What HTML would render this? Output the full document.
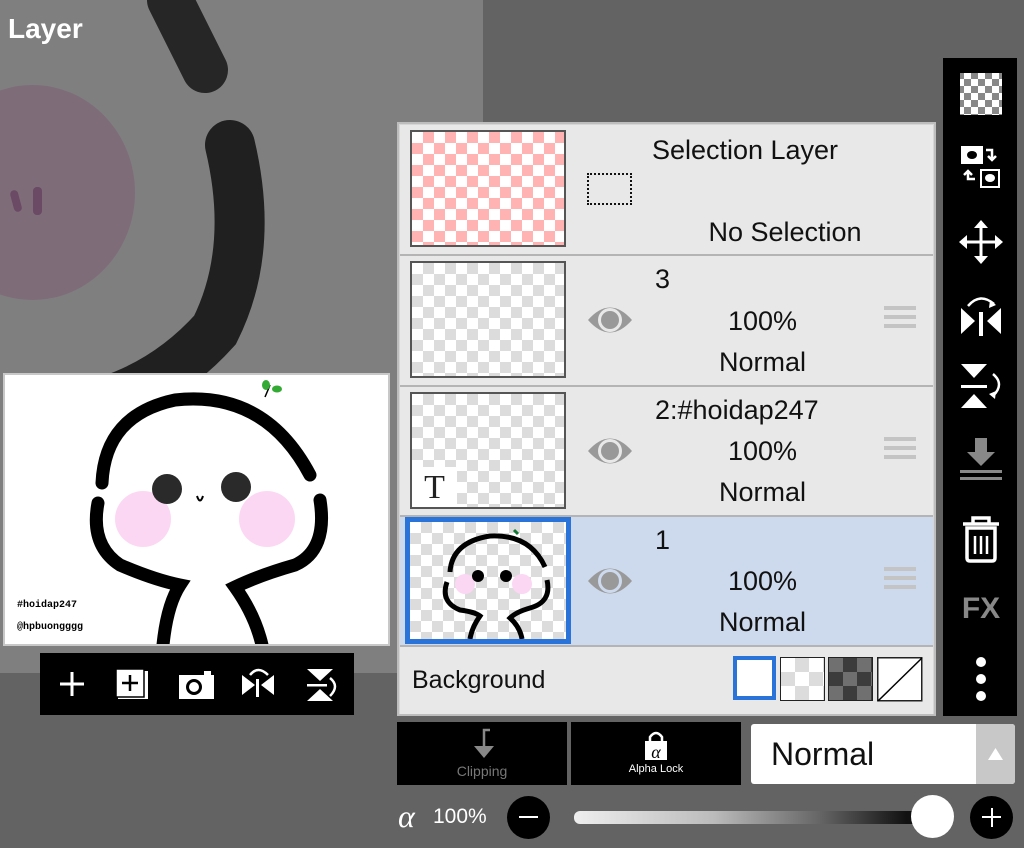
<!DOCTYPE html>
<html><head><meta charset="utf-8"><style>
*{margin:0;padding:0;box-sizing:border-box}
body{width:1024px;height:848px;overflow:hidden;background:#636363;font-family:"Liberation Sans",sans-serif;position:relative}
.a{position:absolute}
.chk{background-color:#fff;background-image:linear-gradient(45deg,#dcdcdc 25%,transparent 25%,transparent 75%,#dcdcdc 75%),linear-gradient(45deg,#dcdcdc 25%,transparent 25%,transparent 75%,#dcdcdc 75%);background-size:22px 22px;background-position:0 0,11px 11px}
.pink{background-color:#fff;background-image:linear-gradient(45deg,#ffb3b3 25%,transparent 25%,transparent 75%,#ffb3b3 75%),linear-gradient(45deg,#ffb3b3 25%,transparent 25%,transparent 75%,#ffb3b3 75%);background-size:22px 22px;background-position:0 0,11px 11px}
.row{position:absolute;left:400px;width:533px;background:#e8e8e8;border-bottom:2px solid #b4b4b4}
.th{position:absolute;left:10px;top:5px;width:156px;height:117px;border:2px solid #555}
.t{position:absolute;font-size:27px;color:#111;text-align:center}
.eye{position:absolute;left:187px;top:47px}
.hb{position:absolute;left:484px;top:50px;width:32px}
.hb i{display:block;height:4px;background:#c4c4c4;margin-bottom:5px}
.tb svg{position:absolute;left:0}
</style></head><body>
<!-- canvas bg -->
<div class="a" style="left:0;top:0;width:483px;height:673px;background:#7f7f7f;overflow:hidden">
 <div class="a" style="left:-70px;top:85px;width:205px;height:215px;border-radius:50%;background:#806878;opacity:.8"></div>
 <div class="a" style="left:12px;top:190px;width:8px;height:22px;border-radius:4px;background:#6a4a64;transform:rotate(-15deg)"></div>
 <div class="a" style="left:33px;top:187px;width:9px;height:28px;border-radius:4px;background:#6a4a64"></div>
 <svg class="a" style="left:0;top:0" width="483" height="673"><path d="M170 0 Q190 40 205 70" stroke="#222" stroke-width="46" stroke-linecap="round" fill="none" opacity=".95"/><path d="M230 145 Q255 250 215 330 Q170 380 110 400" stroke="#202020" stroke-width="50" stroke-linecap="round" fill="none"/></svg>
</div>
<div class="a" style="left:8px;top:13px;color:#fff;font-weight:bold;font-size:28px">Layer</div>

<!-- preview -->
<div class="a" style="left:3px;top:373px;width:387px;height:273px;background:#fff;border:2px solid #c8c8c8;overflow:hidden">
<svg width="387" height="273" viewBox="0 0 387 273">
 <path d="M97 108 Q100 40 170 25 Q260 15 305 100" stroke="#000" stroke-width="13" fill="none" stroke-linecap="round"/>
 <path d="M93 128 Q85 170 115 190 Q150 205 175 210 Q162 230 158 270" stroke="#000" stroke-width="13" fill="none" stroke-linecap="round"/>
 <path d="M315 125 Q323 175 290 190 Q255 200 230 212 Q250 240 257 270" stroke="#000" stroke-width="13" fill="none" stroke-linecap="round"/>
 <circle cx="138" cy="144" r="28" fill="#fbd7f3"/><circle cx="262" cy="144" r="28" fill="#fbd7f3"/>
 <circle cx="162" cy="114" r="15" fill="#2a2a2a"/><circle cx="231" cy="112" r="15" fill="#2a2a2a"/>
 <path d="M192 121 Q195 130 198 121" stroke="#000" stroke-width="2" fill="none"/>
 <path d="M260 22 Q263 15 265 10" stroke="#000" stroke-width="1.5" fill="none"/>
 <ellipse cx="261" cy="10" rx="4" ry="5" fill="#3a3"/><ellipse cx="272" cy="14" rx="5" ry="3.5" fill="#3a3"/>
 <text x="12" y="232" font-family="Liberation Mono" font-size="10" font-weight="bold">#hoidap247</text>
 <text x="12" y="254" font-family="Liberation Mono" font-size="10" font-weight="bold">@hpbuongggg</text>
</svg></div>
<div class="a" style="left:40px;top:653px;width:314px;height:62px;background:#000">
<svg width="314" height="62" fill="#fff">
 <path d="M20 31h24M32 19v24" stroke="#fff" stroke-width="3"/>
 <rect x="78" y="18" width="30" height="28" fill="#fff"/><rect x="76" y="16" width="28" height="28" fill="#fff" stroke="#000" stroke-width="1.5"/><path d="M82 30h16M90 22v16" stroke="#000" stroke-width="2.5"/>
 <rect x="139" y="22" width="35" height="24"/><rect x="164" y="18" width="7" height="4"/><circle cx="154" cy="34" r="8" fill="#000"/><circle cx="154" cy="34" r="5"/>
 <path d="M202 22l13 10-13 10zM234 22l-13 10 13 10z"/><rect x="216" y="26" width="3" height="18"/><path d="M210 22q8-10 18 0" stroke="#fff" stroke-width="2.5" fill="none"/>
 <path d="M267 16h26l-13 12zM267 48h26l-13-12z"/><rect x="267" y="31" width="20" height="2.5"/><path d="M290 25q10 8 0 18" stroke="#fff" stroke-width="2.5" fill="none"/>
</svg></div>

<!-- layer panel -->
<div class="a" style="left:397px;top:122px;width:539px;height:594px;background:#d6d6d6;border:2px solid #bdbdbd"></div>
<div class="row" style="top:125px;height:131px">
 <div class="th pink"></div>
 <div class="a" style="left:187px;top:48px;width:45px;height:32px;border:2px dotted #111"></div>
 <div class="t" style="left:210px;top:10px;width:270px">Selection Layer</div>
 <div class="t" style="left:250px;top:92px;width:270px">No Selection</div>
</div>
<div class="row" style="top:256px;height:131px">
 <div class="th chk"></div>
 <svg class="eye" width="46" height="34"><path d="M1 17Q23-8 45 17Q23 42 1 17z" fill="#999"/><circle cx="23" cy="17" r="12" fill="#e8e8e8"/><circle cx="23" cy="17" r="9" fill="#999"/></svg>
 <div class="t" style="left:255px;top:8px">3</div>
 <div class="t" style="left:290px;top:50px;width:145px">100%</div>
 <div class="t" style="left:290px;top:91px;width:145px">Normal</div>
 <div class="hb"><i></i><i></i><i></i></div>
</div>
<div class="row" style="top:387px;height:130px">
 <div class="th chk"><div class="a" style="left:0;bottom:0;width:45px;height:40px;background:#fff;font-family:'Liberation Serif';font-size:34px;text-align:center;line-height:42px;color:#222">T</div></div>
 <svg class="eye" width="46" height="34"><path d="M1 17Q23-8 45 17Q23 42 1 17z" fill="#999"/><circle cx="23" cy="17" r="12" fill="#e8e8e8"/><circle cx="23" cy="17" r="9" fill="#999"/></svg>
 <div class="t" style="left:255px;top:8px">2:#hoidap247</div>
 <div class="t" style="left:290px;top:49px;width:145px">100%</div>
 <div class="t" style="left:290px;top:90px;width:145px">Normal</div>
 <div class="hb"><i></i><i></i><i></i></div>
</div>
<div class="row" style="top:517px;height:130px;background:#cdd9ec">
 <div class="a chk" style="left:5px;top:0;width:166px;height:127px;border:5px solid #2a73d8;overflow:hidden">
 <svg width="156" height="117"><path d="M40 50Q42 20 80 14Q120 12 135 45" stroke="#000" stroke-width="5" fill="none"/><path d="M37 60Q30 80 50 88Q65 90 70 94Q62 105 60 117" stroke="#000" stroke-width="5" fill="none"/><path d="M137 58Q142 80 120 86Q106 90 100 96Q110 105 112 117" stroke="#000" stroke-width="5" fill="none"/><circle cx="55" cy="62" r="10" fill="#fbd7f3"/><circle cx="112" cy="62" r="10" fill="#fbd7f3"/><circle cx="68" cy="54" r="6"/><circle cx="96" cy="54" r="6"/><path d="M104 8l4 4" stroke="#173" stroke-width="3"/></svg></div>
 <svg class="eye" width="46" height="34"><path d="M1 17Q23-8 45 17Q23 42 1 17z" fill="#999"/><circle cx="23" cy="17" r="12" fill="#cdd9ec"/><circle cx="23" cy="17" r="9" fill="#999"/></svg>
 <div class="t" style="left:255px;top:8px">1</div>
 <div class="t" style="left:290px;top:49px;width:145px">100%</div>
 <div class="t" style="left:290px;top:90px;width:145px">Normal</div>
 <div class="hb"><i></i><i></i><i></i></div>
</div>
<div class="row" style="top:647px;height:67px;border:none">
 <div class="t" style="left:12px;top:19px;font-size:25px">Background</div>
 <div class="a" style="left:333px;top:9px;width:43px;height:44px;border:4px solid #2a73d8;background:#fff"></div>
 <div class="a chk" style="left:380px;top:10px;width:45px;height:44px;border:1.5px solid #222;background-size:28px 28px;background-position:0 0,14px 14px"></div>
 <div class="a" style="left:428px;top:10px;width:45px;height:44px;border:1.5px solid #222;background-color:#707070;background-image:linear-gradient(45deg,#3c3c3c 25%,transparent 25%,transparent 75%,#3c3c3c 75%),linear-gradient(45deg,#3c3c3c 25%,transparent 25%,transparent 75%,#3c3c3c 75%);background-size:28px 28px;background-position:0 0,14px 14px"></div>
 <svg class="a" style="left:477px;top:10px" width="46" height="45"><rect x=".75" y=".75" width="44" height="43" fill="#fff" stroke="#222" stroke-width="1.5"/><path d="M1 44L45 1" stroke="#000" stroke-width="1.5"/></svg>
</div>

<!-- right toolbar -->
<div class="a tb" style="left:943px;top:58px;width:74px;height:658px;background:#000">
<svg width="74" height="658">
 <defs><pattern id="p" width="14" height="14" patternUnits="userSpaceOnUse"><rect width="14" height="14" fill="#fff"/><rect width="7" height="7" fill="#888"/><rect x="7" y="7" width="7" height="7" fill="#888"/></pattern></defs>
 <rect x="17" y="15" width="42" height="42" fill="url(#p)"/>
 <rect x="18" y="88" width="22" height="18" fill="#fff"/><ellipse cx="29" cy="97" rx="5" ry="4"/><rect x="38" y="112" width="18" height="17" fill="none" stroke="#fff" stroke-width="2"/><ellipse cx="47" cy="120" rx="5" ry="4" fill="#fff"/>
 <path d="M43 92h6v8M45 98l4 4 4-4M32 121h-7v-6M21 117l4-4 4 4" stroke="#fff" stroke-width="2.5" fill="none"/>
 <path d="M38 166v36M20 184h36" stroke="#fff" stroke-width="3"/><path d="M38 162l-7 8h14zM38 206l-7-8h14zM16 184l8-7v14zM60 184l-8-7v14z" fill="#fff"/>
 <path d="M18 250l14 13-14 13zM58 250l-14 13 14 13z" fill="#fff"/><rect x="36" y="254" width="4" height="24" fill="#fff"/><path d="M25 248q12-14 26-2" stroke="#fff" stroke-width="2.5" fill="none"/><path d="M47 242l6 5-7 3z" fill="#fff"/>
 <path d="M18 306h26l-13 14zM18 350h26l-13-14z" fill="#fff"/><rect x="18" y="327" width="26" height="3" fill="#fff"/><path d="M50 316q12 10 0 22" stroke="#fff" stroke-width="2.5" fill="none"/><path d="M46 336l6 5 1-8z" fill="#fff"/>
 <path d="M32 380h12v14h8l-14 14-14-14h8z" fill="#888"/><rect x="17" y="412" width="42" height="3" fill="#888"/><rect x="17" y="419" width="42" height="3" fill="#888"/>
 <path d="M20 466h36M30 466v-6h16v6M24 470h28v30q0 3-3 3h-22q-3 0-3-3z" stroke="#fff" stroke-width="3.5" fill="none"/><path d="M32 478v18M38 478v18M44 478v18" stroke="#fff" stroke-width="2.5"/>
 <text x="38" y="560" text-anchor="middle" fill="#888" font-size="30" font-weight="bold" font-family="Liberation Sans">FX</text>
 <circle cx="38" cy="604" r="5" fill="#fff"/><circle cx="38" cy="621" r="5" fill="#fff"/><circle cx="38" cy="638" r="5" fill="#fff"/>
</svg></div>

<!-- bottom -->
<div class="a" style="left:397px;top:722px;width:170px;height:63px;background:#000;text-align:center">
<svg width="40" height="38" style="margin-top:4px"><path d="M28 4h-6v18" stroke="#888" stroke-width="2.5" fill="none"/><path d="M12 20h20l-10 12z" fill="#888"/></svg>
<div style="color:#777;font-size:14px;margin-top:-6px">Clipping</div></div>
<div class="a" style="left:571px;top:722px;width:170px;height:63px;background:#000;text-align:center">
<svg width="30" height="34" style="margin-top:6px"><path d="M9 14v-5q6-8 12 0v5" stroke="#fff" stroke-width="2.5" fill="none"/><rect x="4" y="13" width="22" height="19" fill="#fff"/><text x="15" y="30" text-anchor="middle" font-family="Liberation Serif" font-style="italic" font-size="18">α</text></svg>
<div style="color:#fff;font-size:11px;margin-top:-4px">Alpha Lock</div></div>
<div class="a" style="left:751px;top:724px;width:264px;height:60px;background:#fff;border-radius:3px">
 <div class="a" style="left:20px;top:12px;font-size:32px;color:#111">Normal</div>
 <div class="a" style="left:225px;top:0;width:39px;height:60px;background:#c8c8c8;border-radius:0 3px 3px 0"><svg width="39" height="60"><path d="M12 36h15l-7.5-12z" fill="#fff"/></svg></div>
</div>
<div class="a" style="left:398px;top:800px;color:#fff;font-family:'Liberation Serif';font-style:italic;font-size:32px;line-height:32px">α</div>
<div class="a" style="left:433px;top:805px;color:#fff;font-size:21px">100%</div>
<div class="a" style="left:507px;top:796px;width:43px;height:43px;border-radius:50%;background:#000"><div class="a" style="left:12px;top:20px;width:19px;height:2px;background:#fff"></div></div>
<div class="a" style="left:574px;top:811px;width:350px;height:13px;border-radius:6px;background:linear-gradient(90deg,#eee,#bbb 40%,#666 70%,#111 95%)"></div>
<div class="a" style="left:911px;top:795px;width:43px;height:43px;border-radius:50%;background:#fff"></div>
<div class="a" style="left:970px;top:796px;width:43px;height:43px;border-radius:50%;background:#000"><div class="a" style="left:12px;top:20px;width:19px;height:2px;background:#fff"></div><div class="a" style="left:20.5px;top:12px;width:2px;height:19px;background:#fff"></div></div>
</body></html>
